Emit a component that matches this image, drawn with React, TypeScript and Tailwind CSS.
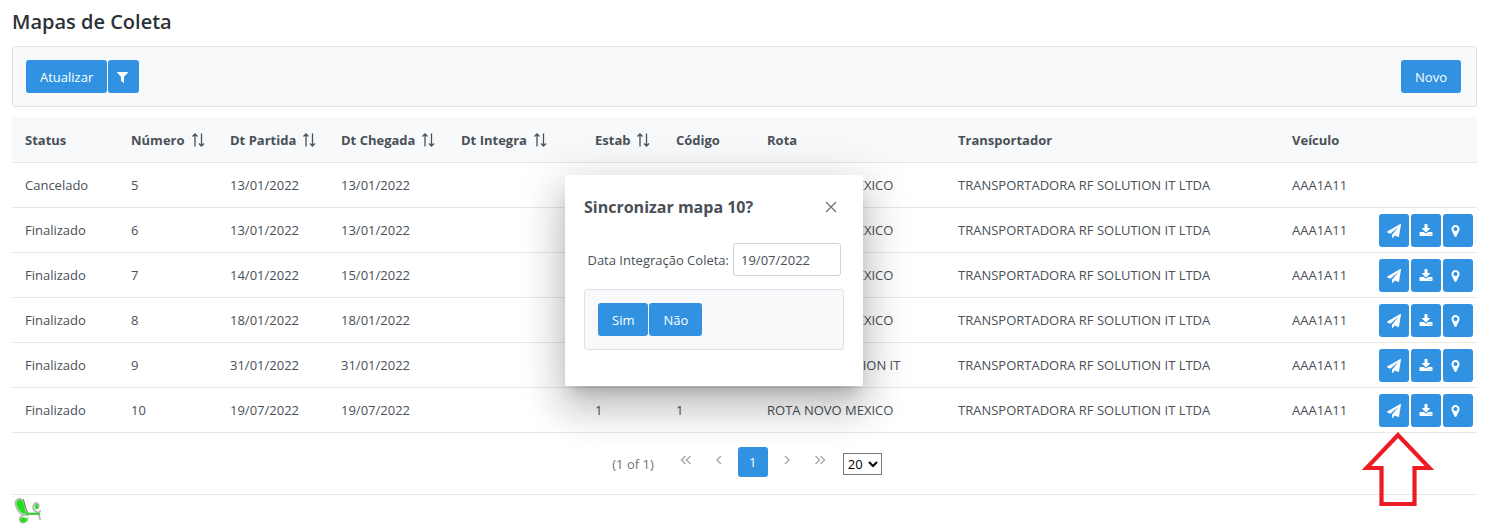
import type { ReactNode } from "react";

type Mapa = {
  status: string;
  numero: number;
  partida: string;
  chegada: string;
  rota: string;
};

const mapas: Mapa[] = [
  { status: "Cancelado", numero: 5, partida: "13/01/2022", chegada: "13/01/2022", rota: "ROTA NOVO MEXICO" },
  { status: "Finalizado", numero: 6, partida: "13/01/2022", chegada: "13/01/2022", rota: "ROTA NOVO MEXICO" },
  { status: "Finalizado", numero: 7, partida: "14/01/2022", chegada: "15/01/2022", rota: "ROTA NOVO MEXICO" },
  { status: "Finalizado", numero: 8, partida: "18/01/2022", chegada: "18/01/2022", rota: "ROTA NOVO MEXICO" },
  { status: "Finalizado", numero: 9, partida: "31/01/2022", chegada: "31/01/2022", rota: "ROTA RF SOLUTION IT" },
  { status: "Finalizado", numero: 10, partida: "19/07/2022", chegada: "19/07/2022", rota: "ROTA NOVO MEXICO" },
];

const columns = [
  { label: "Status", width: "w-[106px]", sortable: false },
  { label: "Número", width: "w-[99px]", sortable: true },
  { label: "Dt Partida", width: "w-[111px]", sortable: true },
  { label: "Dt Chegada", width: "w-[120px]", sortable: true },
  { label: "Dt Integra", width: "w-[134px]", sortable: true },
  { label: "Estab", width: "w-[81px]", sortable: true },
  { label: "Código", width: "w-[91px]", sortable: false },
  { label: "Rota", width: "w-[191px]", sortable: false },
  { label: "Transportador", width: "w-[334px]", sortable: false },
  { label: "Veículo", width: "w-[95px]", sortable: false },
];

function SortIcon() {
  return (
    <svg viewBox="0 0 14 14" className="size-[14px] shrink-0" fill="none" stroke="currentColor" strokeWidth="1.3">
      <path d="M4 13.500V1M1.500 3.500l2.500-2.500 2.500 2.500M10.500 .5V13M8 10.500l2.500 2.500 2.500-2.500" />
    </svg>
  );
}

function FilterIcon() {
  return (
    <svg viewBox="192 128 1408 1536" className="h-3 w-[11px]" fill="currentColor">
      <path d="M1595 295q17 41-14 70l-493 493v742q0 42-39 59-13 5-25 5-27 0-45-19l-256-256q-19-19-19-45v-486l-493-493q-31-29-14-70 17-39 59-39h1280q42 0 59 39z" />
    </svg>
  );
}

function SendIcon() {
  return (
    <svg viewBox="0 0 1792 1792" className="size-[14px]" fill="currentColor">
      <path d="M1764 11q33 24 27 64l-256 1536q-5 29-32 45-14 8-31 8-11 0-24-5l-453-185-242 295q-18 23-49 23-13 0-22-4-19-7-30.500-23.500t-11.500-36.500v-349l864-1059-1069 925-395-162q-37-14-40-55-2-40 32-59l1664-960q15-9 32-9 20 0 36 11z" />
    </svg>
  );
}

function DownloadIcon() {
  return (
    <svg viewBox="0 0 1792 1792" className="size-[14px]" fill="currentColor">
      <path d="M1344 1344q0-26-19-45t-45-19-45 19-19 45 19 45 45 19 45-19 19-45zm256 0q0-26-19-45t-45-19-45 19-19 45 19 45 45 19 45-19 19-45zm128-224v320q0 40-28 68t-68 28h-1472q-40 0-68-28t-28-68v-320q0-40 28-68t68-28h465l135 136q58 56 136 56t136-56l136-136h464q40 0 68 28t28 68zm-325-569q17 41-14 70l-448 448q-18 19-45 19t-45-19l-448-448q-31-29-14-70 17-39 59-39h256v-448q0-26 19-45t45-19h256q26 0 45 19t19 45v448h256q42 0 59 39z" />
    </svg>
  );
}

function MarkerIcon() {
  return (
    <svg viewBox="384 0 1024 1792" className="h-[14px] w-[9px]" fill="currentColor">
      <path d="M1152 640q0-106-75-181t-181-75-181 75-75 181 75 181 181 75 181-75 75-181zm256 0q0 109-33 179l-364 774q-16 33-47.500 52t-67.500 19-67.500-19-46.500-52l-365-774q-33-70-33-179 0-212 150-362t362-150 362 150 150 362z" />
    </svg>
  );
}

function Button({ children }: { children: ReactNode }) {
  return (
    <button type="button" className="h-[33px] rounded-[3px] bg-[#3192e1] px-[14px] text-white">
      {children}
    </button>
  );
}

function IconButton({ label, children }: { label: string; children: ReactNode }) {
  return (
    <button
      type="button"
      aria-label={label}
      className="flex h-[33px] w-[30px] items-center rounded-[3px] bg-[#3192e1] pl-2 text-white"
    >
      {children}
    </button>
  );
}

function PageButton({ label, path }: { label: string; path: string }) {
  return (
    <button type="button" aria-label={label} className="flex h-[27px] w-[30px] items-center justify-center text-[#a3a8ad]">
      <svg viewBox="0 0 12 10" className="h-[10px] w-3" fill="none" stroke="currentColor" strokeWidth="1.4">
        <path d={path} />
      </svg>
    </button>
  );
}

function PointerArrow() {
  return (
    <svg
      viewBox="0 0 72 76"
      className="pointer-events-none absolute top-full -left-[17px] mt-1 h-[76px] w-[72px] max-w-none"
      fill="none"
      stroke="#ed1c24"
      strokeWidth="4.200"
    >
      <path d="M36 4 4.500 37H19.500V73H52.500V37H67.500Z" />
    </svg>
  );
}

function Logo() {
  return (
    <svg viewBox="0 0 28 28" className="h-7 w-7" fill="none" strokeLinecap="round">
      <path
        d="M3 2C5 0 9 1 10 5C11 9 11 13 13 15.500C10 17.500 6 16 4 12C2 8 0 4 3 2ZM12 16H25M26 13C24 16 25 18 26 21M14 17C9 16 5 19 6 22C7 26 13 25 13.500 20M25 15C20 14 18 10 20 6.500C22 3 26 6 24 10"
        stroke="#b4bdb4"
        strokeWidth="2"
      />
      <path d="M3.500 2.500C5.500 1 8.500 2 9.500 5.500C10.500 10 10.500 13 12.500 15C10 16 7 15 5 11.500C3 8 1.500 4.500 3.500 2.500Z" fill="#1fe414" />
      <path d="M12 15.800H25" stroke="#2fd828" strokeWidth="2" />
      <path d="M9.500 1.500C11 6 11 11 14 14.500" stroke="#3f7f3c" strokeWidth=".8" />
      <ellipse cx="9.500" cy="21.800" rx="3.200" ry="2.600" fill="#1fe414" />
      <ellipse cx="22.500" cy="8.500" rx="1.700" ry="2.700" fill="#3ad833" />
    </svg>
  );
}

function SyncDialog() {
  return (
    <div className="pointer-events-none absolute inset-0 flex items-start justify-center pt-[175px] pr-16">
      <section
        role="dialog"
        aria-labelledby="sync-title"
        className="pointer-events-auto w-[298px] rounded-[2px] bg-white px-[19px] pt-[19px] pb-9 shadow-[0_11px_15px_-7px_rgba(0,0,0,0.2),0_24px_38px_3px_rgba(0,0,0,0.14),0_9px_46px_8px_rgba(0,0,0,0.12)]"
      >
        <header className="flex h-[25px] items-center justify-between pr-[7px]">
          <h2 id="sync-title" className="text-[16px] leading-6 font-bold">
            Sincronizar mapa 10?
          </h2>
          <button type="button" aria-label="Fechar" className="pt-px text-[#6c757d]">
            <svg viewBox="0 0 12 12" className="size-3" fill="none" stroke="currentColor" strokeWidth="1.3">
              <path d="M1 1 11 11M11 1 1 11" />
            </svg>
          </button>
        </header>
        <div className="mt-6 flex items-center justify-end gap-1 pr-[3px]">
          <label htmlFor="data-integracao" className="whitespace-nowrap">
            Data Integração Coleta:
          </label>
          <input
            id="data-integracao"
            type="text"
            defaultValue="19/07/2022"
            className="h-[33px] w-[108px] rounded-[3px] border border-[#ced4da] bg-white px-[7px]"
          />
        </div>
        <div className="mt-[13px] flex gap-px rounded-[3px] border border-[#dee2e6] bg-[#f8f9fb] p-[13px]">
          <Button>Sim</Button>
          <Button>Não</Button>
        </div>
      </section>
    </div>
  );
}

export default function App() {
  return (
    <main className="relative min-h-screen bg-white pr-[15px] pl-3 font-['Open_Sans',sans-serif] text-[13px] leading-5 text-[#495057]">
      <h1 className="pt-2 text-[20px] leading-7 font-semibold text-[#2b3238]">Mapas de Coleta</h1>

      <div className="mt-[10px] flex items-center justify-between rounded-[3px] border border-[#dee2e6] bg-[#f8f9fb] py-[13px] pr-[15px] pl-[13px]">
        <div className="flex gap-px">
          <Button>Atualizar</Button>
          <button
            type="button"
            aria-label="Filtrar"
            className="flex h-[33px] w-[31px] items-center rounded-[3px] bg-[#3192e1] pl-[9px] text-white"
          >
            <FilterIcon />
          </button>
        </div>
        <Button>Novo</Button>
      </div>

      <table className="mt-[10px] w-full table-fixed border-collapse text-left">
        <thead>
          <tr className="h-[45px] border-b border-[#e4e7ea] bg-[#f8f9fb]">
            {columns.map((column) => (
              <th key={column.label} scope="col" className={`${column.width} pt-[2px] pl-[13px] font-bold whitespace-nowrap`}>
                <span className="flex items-center gap-[6px]">
                  {column.label}
                  {column.sortable && <SortIcon />}
                </span>
              </th>
            ))}
            <td className="w-[103px]" />
          </tr>
        </thead>
        <tbody>
          {mapas.map((mapa, index) => (
            <tr key={mapa.numero} className="h-[45px] border-b border-[#e7e7e7] whitespace-nowrap">
              <td className="pl-[13px]">{mapa.status}</td>
              <td className="pl-[13px]">{mapa.numero}</td>
              <td className="pl-[13px]">{mapa.partida}</td>
              <td className="pl-[13px]">{mapa.chegada}</td>
              <td className="pl-[13px]" />
              <td className="pl-[13px]">1</td>
              <td className="pl-[13px]">1</td>
              <td className="pl-[13px]">{mapa.rota}</td>
              <td className="pl-[13px]">TRANSPORTADORA RF SOLUTION IT LTDA</td>
              <td className="pl-[13px]">AAA1A11</td>
              <td className="pt-[2px] pl-[5px]">
                {mapa.status === "Finalizado" && (
                  <div className="flex gap-[2px]">
                    <div className="relative">
                      <IconButton label="Sincronizar">
                        <SendIcon />
                      </IconButton>
                      {index === mapas.length - 1 && <PointerArrow />}
                    </div>
                    <IconButton label="Baixar">
                      <DownloadIcon />
                    </IconButton>
                    <IconButton label="Localizar">
                      <MarkerIcon />
                    </IconButton>
                  </div>
                )}
              </td>
            </tr>
          ))}
        </tbody>
      </table>

      <nav aria-label="Paginação" className="flex items-start justify-center border-b border-[#e7e7e7] pt-[14px] pb-[17px] pl-[5px]">
        <span className="mr-[17px] pt-[7px] text-[#6c757d]">(1 of 1)</span>
        <div className="flex gap-[3px]">
          <PageButton label="Primeira" path="M5.500 1 1.500 5l4 4M10.500 1l-4 4 4 4" />
          <PageButton label="Anterior" path="M8 1 4 5l4 4" />
          <button type="button" aria-current="page" className="mx-px size-[30px] rounded-[3px] bg-[#3192e1] text-white">
            1
          </button>
          <PageButton label="Próxima" path="M4 1l4 4-4 4" />
          <PageButton label="Última" path="M1.500 1l4 4-4 4M6.500 1l4 4-4 4" />
        </div>
        <select
          aria-label="Linhas por página"
          defaultValue="20"
          className="mt-[6px] ml-2 h-[22px] w-[39px] border border-[#767676] bg-white text-[13px] text-black"
        >
          <option>20</option>
        </select>
      </nav>

      <footer className="pt-[3px] pl-[2px]">
        <a href="#" aria-label="Início" className="inline-block">
          <Logo />
        </a>
      </footer>

      <SyncDialog />
    </main>
  );
}
